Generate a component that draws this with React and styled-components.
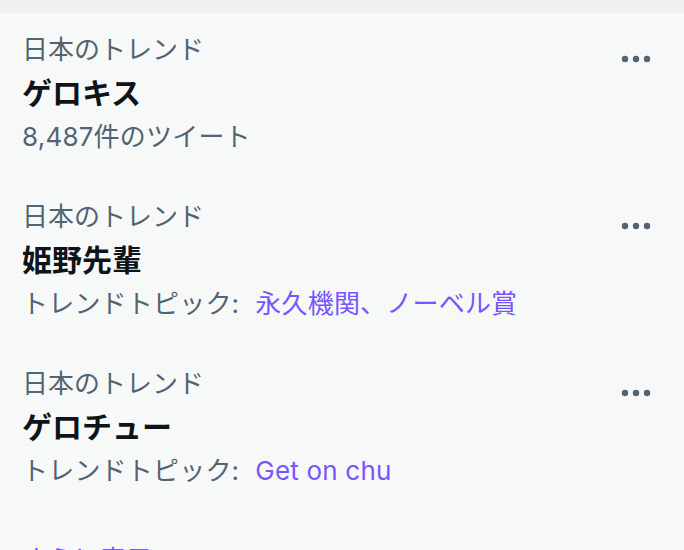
import React from "react";
import styled, { createGlobalStyle } from "styled-components";

const Global = createGlobalStyle`
  html, body { margin: 0; padding: 0; background: #f7f9f9; }
  body { font-family: Inter, "Noto Sans CJK JP", sans-serif; }
`;

const Page = styled.div`
  width: 684px;
  height: 550px;
  overflow: hidden;
  background: #f7f9f9;
  display: flex;
  flex-direction: column;
`;

const TopBand = styled.div`
  height: 13px;
  flex: none;
  background: #eff1f1;
`;

const Item = styled.div`
  display: flex;
  justify-content: space-between;
  align-items: flex-start;
  padding: 17px 28px 22px 22px;
  flex: none;
`;

const Body = styled.div`
  display: flex;
  flex-direction: column;
`;

const Label = styled.div`
  font-size: 26px;
  line-height: 40px;
  color: #536471;
  white-space: nowrap;
`;

const Title = styled.div`
  font-size: 30px;
  line-height: 46px;
  font-weight: 700;
  color: #0f1419;
  white-space: nowrap;
`;

const Meta = styled.div`
  font-size: 26px;
  line-height: 42px;
  color: #536471;
  white-space: nowrap;
  letter-spacing: 0.2px;
`;

const Link = styled.span`
  color: #7856ff;
  margin-left: 16px;
`;

const MoreButton = styled.div`
  width: 40px;
  height: 40px;
  margin-top: 9px;
  display: flex;
  align-items: center;
  justify-content: center;
  color: #536471;
`;

const ShowMore = styled.div`
  padding: 26px 22px;
  font-size: 26px;
  line-height: 40px;
  color: #7856ff;
`;

const Dots = () => (
  <svg width="30" height="10" viewBox="0 0 30 10" fill="currentColor">
    <circle cx="4" cy="5" r="3.2" />
    <circle cx="15" cy="5" r="3.2" />
    <circle cx="26" cy="5" r="3.2" />
  </svg>
);

const trends = [
  { title: "ゲロキス", count: "8,487件のツイート" },
  { title: "姫野先輩", topic: "永久機関、ノーベル賞" },
  { title: "ゲロチュー", topic: "Get on chu" },
];

export default function App() {
  return (
    <Page>
      <Global />
      <TopBand />
      {trends.map((t) => (
        <Item key={t.title}>
          <Body>
            <Label>日本のトレンド</Label>
            <Title>{t.title}</Title>
            {t.count ? (
              <Meta>{t.count}</Meta>
            ) : (
              <Meta>
                トレンドトピック:<Link>{t.topic}</Link>
              </Meta>
            )}
          </Body>
          <MoreButton>
            <Dots />
          </MoreButton>
        </Item>
      ))}
      <ShowMore>さらに表示</ShowMore>
    </Page>
  );
}
